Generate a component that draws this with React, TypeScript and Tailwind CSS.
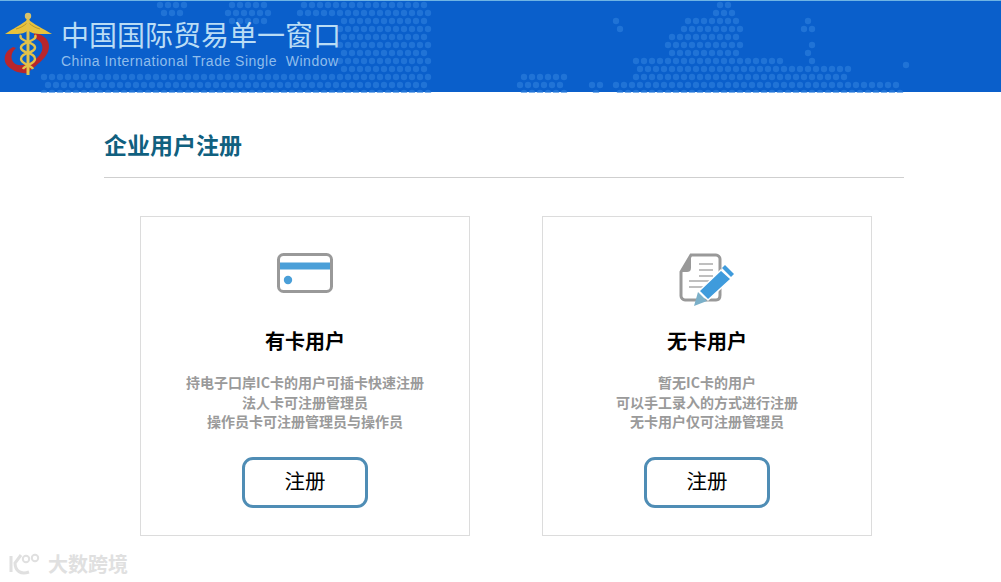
import React from "react";

const CJK = '"Noto Sans CJK SC", "Liberation Sans", sans-serif';

// world-map dots in the banner: [x0, x1, y0, y1] boxes on a staggered grid
const DOT_REGIONS = [
  [157, 187, 3, 14],
  [227, 270, 3, 20],
  [300, 340, 3, 14],
  [43, 340, 76, 92],
  [340, 428, 3, 92],
  [520, 567, 76, 92],
  [590, 600, 84, 92],
  [606, 607, 33, 66],
  [613, 623, 13, 30],
  [613, 900, 78, 92],
  [636, 780, 54, 92],
  [666, 743, 34, 92],
  [683, 743, 16, 34],
  [716, 733, 3, 16],
  [780, 850, 63, 92],
  [808, 812, 40, 63],
  [803, 813, 16, 30],
  [826, 830, 20, 26],
];

function BannerDots() {
  const dots: React.ReactNode[] = [];
  for (let row = 0; row < 12; row++) {
    const y = 4 + row * 8;
    for (let col = 0; col < 126; col++) {
      const x = col * 8 + (row % 2 ? 4 : 0);
      const hit = DOT_REGIONS.some(
        ([x0, x1, y0, y1]) => x >= x0 && x <= x1 && y >= y0 && y <= y1,
      );
      if (hit) dots.push(<circle key={`${row}-${col}`} cx={x} cy={y} r={3.2} />);
    }
  }
  return (
    <svg className="absolute inset-0" width="1001" height="92" fill="#2f80dd" fillOpacity="0.6">
      {dots}
      <circle cx="906" cy="64" r="3.2" />
    </svg>
  );
}

function Logo() {
  return (
    <svg width="54" height="70" viewBox="0 0 54 70" className="shrink-0">
      {/* red swoosh */}
      <path d="M31 24C46 26 50 38 42 48C36 55 28 60 25 64C18 65 8 62 3 55C0 49 2 42 10 38L13 39C8 43 7 50 11 54C17 59 27 55 35 48C42 41 41 32 31 29Z" fill="#b8262c" />
      {/* wings */}
      <path d="M25 10C20 15 9 20 2 25C10 25 20 26 24 22ZM25 10C30 15 41 20 49 25C41 25 30 26 26 22Z" fill="#e8c23c" />
      <path d="M13 20C17 19 21 17 24 14M37 20C33 19 29 17 26 14" stroke="#b99a2c" strokeWidth="1" fill="none" />
      <circle cx="25" cy="7" r="3.2" fill="#d8c26a" />
      {/* staff and snakes */}
      <rect x="23.5" y="9" width="3" height="57" fill="#e3c24a" />
      <path d="M18 26C14 32 33 33 32 39C31 45 18 43 18 50C18 55 28 56 30 60M32 26C36 32 17 33 18 39C19 45 32 43 32 50C32 55 22 56 20 60" fill="none" stroke="#e3c24a" strokeWidth="2.4" />
    </svg>
  );
}

function CardIcon() {
  return (
    <svg width="56" height="41" viewBox="0 0 56 41">
      <rect x="1.5" y="1.5" width="53" height="37" rx="5" fill="#fff" stroke="#999" strokeWidth="3" />
      <rect x="3" y="9.5" width="50" height="7" fill="#4a9fd8" />
      <circle cx="11" cy="27" r="4.2" fill="#4a9fd8" />
    </svg>
  );
}

function FormIcon() {
  return (
    <svg width="56" height="54" viewBox="0 0 56 54">
      <path d="M12 2H37C39 2 41 4 41 6V42C41 46 39 47 37 47H6C4 47 2 45 2 43V19Z" fill="#fff" stroke="#999" strokeWidth="3" />
      <path d="M12 2V15C12 18 10 19 8 19H2Z" fill="#999" />
      <path d="M20 11H34M20 17H34M20 23H34M10 28H30M10 34H24" stroke="#aaa" strokeWidth="1.5" />
      <path d="M42 17L52 26L29 47L20 38Z" fill="#3f9bdc" stroke="#fff" strokeWidth="1.5" />
      <path d="M45 14L48 11L57 20L54 23Z" fill="#3f9bdc" transform="translate(-2 1)" />
      <path d="M19 39L28 48L15 53Z" fill="#7bb0c9" />
    </svg>
  );
}

function RegisterCard({
  icon,
  title,
  lines,
}: {
  icon: React.ReactNode;
  title: string;
  lines: string[];
}) {
  return (
    <div className="flex h-[320px] w-[330px] flex-col items-center border border-[#dcdcdc] bg-white">
      <div className="mt-[36px] flex h-[57px] items-start">{icon}</div>
      <h2 className="mt-[16px] text-[20px] leading-[30px] font-bold text-black">{title}</h2>
      <div className="mt-[17px] text-center text-[14px] leading-[19.5px] font-bold text-[#9a9a9a]">
        {lines.map((line) => (
          <p key={line}>{line}</p>
        ))}
      </div>
      <button className="mt-[25px] flex h-[51px] w-[126px] items-center justify-center rounded-[11px] border-[3px] border-[#4f8db5] bg-white pb-[3px] text-[20.5px] text-black">
        注册
      </button>
    </div>
  );
}

export default function App() {
  return (
    <div className="relative h-[582px] w-[1001px] overflow-hidden bg-white" style={{ fontFamily: CJK }}>
      {/* Banner */}
      <header className="relative flex h-[92px] items-start border-t border-[#6fb4e4] bg-[#0a5fcb] pt-[8px] pl-[3px]">
        <BannerDots />
        <div className="relative flex items-start gap-[4px]">
          <Logo />
          <div className="mt-[7px]">
            <div className="text-[28px] leading-[36px] text-[#b9dcf5]">中国国际贸易单一窗口</div>
            <div className="text-[14px] leading-[18px] tracking-[0.5px] text-[#8fbdec]" style={{ fontFamily: '"Liberation Sans", sans-serif' }}>
              China International Trade Single&nbsp; Window
            </div>
          </div>
        </div>
      </header>

      <main className="ml-[104px] w-[800px]">
        <h1 className="flex h-[86px] items-center border-b border-[#cfcfcf] pt-[20px] text-[23px] font-bold text-[#10607f]">
          企业用户注册
        </h1>
        <div className="mt-[38px] flex gap-[72px] pl-[36px]">
          <RegisterCard
            icon={<CardIcon />}
            title="有卡用户"
            lines={["持电子口岸IC卡的用户可插卡快速注册", "法人卡可注册管理员", "操作员卡可注册管理员与操作员"]}
          />
          <RegisterCard
            icon={<FormIcon />}
            title="无卡用户"
            lines={["暂无IC卡的用户", "可以手工录入的方式进行注册", "无卡用户仅可注册管理员"]}
          />
        </div>
      </main>

      {/* Watermark */}
      <div className="absolute bottom-[5px] left-[8px] flex items-center gap-[3px] text-[20px] leading-[24px] font-bold text-[#e0e0e0]">
        <svg width="37" height="26" viewBox="0 0 37 26" fill="none" stroke="#e0e0e0" strokeWidth="3">
          <path d="M3 5V21M13 4L7 12C7 20 13 24 21 21" />
          <circle cx="18" cy="8" r="3.2" strokeWidth="2" />
          <circle cx="27" cy="7" r="3.2" strokeWidth="2" />
        </svg>
        <span>大数跨境</span>
      </div>
    </div>
  );
}
